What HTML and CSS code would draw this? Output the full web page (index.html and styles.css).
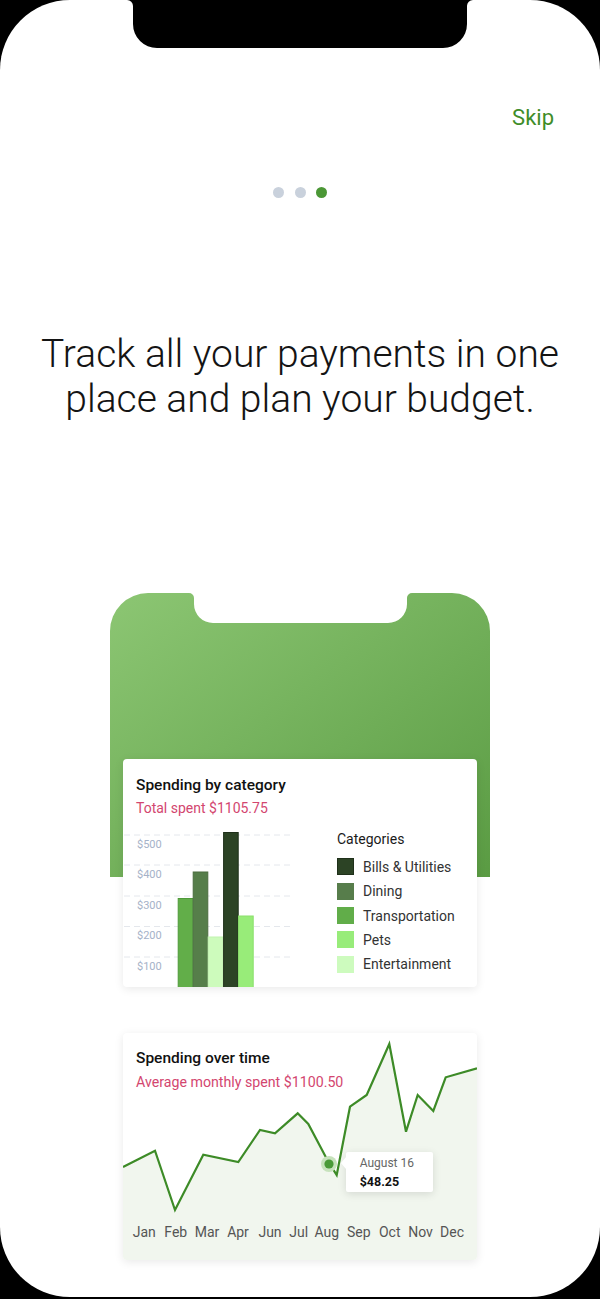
FILE: index.html
```html
<!DOCTYPE html>
<html lang="en">
<head>
<meta charset="utf-8">
<title>Onboarding</title>
<link rel="stylesheet" href="styles.css">
</head>
<body>
<div class="screen">
  <svg class="notch" width="346" height="48" viewBox="0 0 346 48"><path d="M0,0 A6,6 0 0 1 6,6 L6,24 A24,24 0 0 0 30,48 L316,48 A24,24 0 0 0 340,24 L340,6 A6,6 0 0 1 346,0 Z" fill="#000"/></svg>

  <header class="skip-row"><span class="skip">Skip</span></header>

  <div class="dots"><span class="dot"></span><span class="dot"></span><span class="dot active"></span></div>

  <h1 class="headline">Track all your payments in one<br>place and plan your budget.</h1>

  <div class="device">
    <svg class="device-top" width="380" height="284" viewBox="0 0 380 284">
      <defs>
        <linearGradient id="g" x1="0" y1="0" x2="1" y2="1">
          <stop offset="0" stop-color="#8cc673"/>
          <stop offset="1" stop-color="#5a9b43"/>
        </linearGradient>
      </defs>
      <path d="M0,284 L0,38 A38,38 0 0 1 38,0 L79,0 A5,5 0 0 1 84,5 L84,11 A19,19 0 0 0 103,30 L278,30 A19,19 0 0 0 297,11 L297,5 A5,5 0 0 1 302,0 L342,0 A38,38 0 0 1 380,38 L380,284 Z" fill="url(#g)"/>
    </svg>

    <div class="cards">
      <section class="card card-category">
        <h2 class="card-title">Spending by category</h2>
        <p class="card-sub">Total spent $1105.75</p>
        <div class="cat-body">
          <svg class="bar-chart" width="214" height="161" viewBox="0 0 214 161">
            <g class="grid">
              <line x1="1" y1="9" x2="167" y2="9"/>
              <line x1="1" y1="39" x2="167" y2="39"/>
              <line x1="1" y1="70" x2="167" y2="70"/>
              <line x1="1" y1="100.5" x2="167" y2="100.5"/>
              <line x1="1" y1="131" x2="167" y2="131"/>
            </g>
            <g class="ylab">
              <text x="14" y="22">$500</text>
              <text x="14" y="52">$400</text>
              <text x="14" y="83">$300</text>
              <text x="14" y="113">$200</text>
              <text x="14" y="144">$100</text>
            </g>
            <rect x="55.2" y="72.5" width="14.6" height="89" fill="#62ae49" stroke="#4f9a3a" stroke-width="1"/>
            <rect x="70.2" y="46" width="14.6" height="115.5" fill="#567e4a" stroke="#4a6d3f" stroke-width="1"/>
            <rect x="85.2" y="111" width="14.6" height="50.5" fill="#cdfbbc" stroke="#c2f3b0" stroke-width="1"/>
            <rect x="100.6" y="6.5" width="14.6" height="155" fill="#2c4325" stroke="#1f301a" stroke-width="1"/>
            <rect x="115.6" y="90" width="14.6" height="71.5" fill="#98ec79" stroke="#8be06c" stroke-width="1"/>
          </svg>
          <div class="legend">
            <div class="legend-title">Categories</div>
            <ul class="legend-list">
              <li><span class="sw sw-bills"></span>Bills &amp; Utilities</li>
              <li><span class="sw sw-dining"></span>Dining</li>
              <li><span class="sw sw-transport"></span>Transportation</li>
              <li><span class="sw sw-pets"></span>Pets</li>
              <li><span class="sw sw-ent"></span>Entertainment</li>
            </ul>
          </div>
        </div>
      </section>

      <section class="card card-time">
        <svg class="line-chart" width="354" height="227" viewBox="0 0 354 227">
          <polygon class="area" points="0,134 32,117.7 52,177 80.3,121.7 115.3,129 137,97 152,100.3 174.7,80.3 185.3,91 205.3,128.7 213.7,142 227,73.7 243.7,62 266.3,11 283,98.7 294.7,62 310.3,78 322.7,44.3 354,35.3 354,227 0,227"/>
          <polyline class="line" points="0,134 32,117.7 52,177 80.3,121.7 115.3,129 137,97 152,100.3 174.7,80.3 185.3,91 205.3,128.7 213.7,142 227,73.7 243.7,62 266.3,11 283,98.7 294.7,62 310.3,78 322.7,44.3 354,35.3"/>
          <circle cx="206" cy="131" r="8" fill="#c7e2bc"/>
          <circle cx="206" cy="131" r="4.6" fill="#4a9a38"/>
          <g class="xlab">
            <text x="21.2" y="203.7">Jan</text>
            <text x="52.8" y="203.7">Feb</text>
            <text x="84" y="203.7">Mar</text>
            <text x="115" y="203.7">Apr</text>
            <text x="147" y="203.7">Jun</text>
            <text x="175.8" y="203.7">Jul</text>
            <text x="203.7" y="203.7">Aug</text>
            <text x="235.8" y="203.7">Sep</text>
            <text x="266.7" y="203.7">Oct</text>
            <text x="297.5" y="203.7">Nov</text>
            <text x="329" y="203.7">Dec</text>
          </g>
        </svg>
        <div class="time-head">
          <h2 class="card-title">Spending over time</h2>
          <p class="card-sub">Average monthly spent $1100.50</p>
        </div>
        <div class="tooltip">
          <div class="tip-date">August 16</div>
          <div class="tip-val">$48.25</div>
        </div>
      </section>
    </div>
  </div>
</div>
</body>
</html>
```

FILE: styles.css
```css
* { box-sizing: border-box; }
html, body { margin: 0; padding: 0; }
body {
  background: #000;
  font-family: Roboto, "Liberation Sans", Arial, sans-serif;
  width: 600px;
  height: 1299px;
  overflow: hidden;
}
.screen {
  position: relative;
  width: 600px;
  height: 1297px;
  background: #fff;
  border-radius: 70px;
  overflow: hidden;
}
.notch { position: absolute; top: 0; left: 127px; display: block; }

.skip-row { display: flex; justify-content: flex-end; padding: 105px 46px 0 0; }
.skip { font-size: 22px; line-height: 26px; color: #3f8d29; }

.dots { display: flex; justify-content: center; gap: 10.5px; margin-top: 55.5px; }
.dot { width: 11px; height: 11px; border-radius: 50%; background: #c9d1dc; }
.dot.active { background: #4b9736; }

.headline {
  margin: 134.2px 0 0;
  font-weight: 300;
  font-size: 39px;
  line-height: 45px;
  text-align: center;
  color: #141414;
  white-space: nowrap;
}

.device { width: 380px; margin: 171.3px auto 0; }
.device-top { display: block; }

.cards {
  position: relative;
  margin-top: -118px;
  padding: 0 13px;
  display: flex;
  flex-direction: column;
  gap: 46px;
}
.card {
  background: #fff;
  border-radius: 4px;
  box-shadow: 0 2px 10px rgba(0, 0, 0, 0.09);
  overflow: hidden;
}
.card-title {
  margin: 0;
  font-size: 15.5px;
  line-height: 18px;
  font-weight: 500;
  color: #111;
}
.card-sub {
  margin: 5.3px 0 0;
  font-size: 14px;
  line-height: 18px;
  color: #d3466f;
}

.card-category { height: 228px; padding-top: 17px; }
.card-category > .card-title,
.card-category > .card-sub { margin-left: 13px; }
.cat-body { display: flex; margin-top: 8.7px; }
.bar-chart { display: block; flex: none; }
.grid line { stroke: #e4e7ec; stroke-width: 1; stroke-dasharray: 6 4; }
.ylab text { font-size: 11px; fill: #a5b2c8; font-family: Roboto, "Liberation Sans", sans-serif; }

.legend { padding-top: 4px; }
.legend-title { font-size: 14px; line-height: 18px; color: #1a1a1a; }
.legend-list {
  list-style: none;
  margin: 10.3px 0 0;
  padding: 0;
  display: flex;
  flex-direction: column;
  gap: 7.4px;
}
.legend-list li {
  display: flex;
  align-items: center;
  height: 17px;
  font-size: 14px;
  color: #333;
}
.sw { width: 17px; height: 17px; margin-right: 9px; flex: none; }
.sw-bills { background: #2c4325; border: 1px solid #1f301a; }
.sw-dining { background: #577d4b; }
.sw-transport { background: #61ad49; }
.sw-pets { background: #98ec7a; }
.sw-ent { background: #cdfbbe; }

.card-time {
  position: relative;
  height: 227px;
  display: grid;
}
.card-time > .line-chart,
.card-time > .time-head { grid-area: 1 / 1; }
.line-chart { display: block; }
.area { fill: #f1f6ee; }
.line { fill: none; stroke: #3d8b27; stroke-width: 2.2; stroke-linejoin: miter; }
.xlab text {
  font-size: 14px;
  fill: #555;
  text-anchor: middle;
  font-family: Roboto, "Liberation Sans", sans-serif;
}
.time-head { align-self: start; padding: 16.3px 13px 0; }
.time-head .card-sub { font-size: 14.2px; }

.tooltip {
  position: absolute;
  left: 222.7px;
  top: 118.7px;
  width: 87.6px;
  height: 40.6px;
  padding: 4px 0 0 14px;
  background: #fff;
  border-radius: 2px;
  box-shadow: 0 2px 8px rgba(0, 0, 0, 0.12);
}
.tooltip::before {
  content: "";
  position: absolute;
  left: -5px;
  top: 5.6px;
  border-top: 6px solid transparent;
  border-bottom: 6px solid transparent;
  border-right: 5px solid #fff;
}
.tip-date { font-size: 12px; line-height: 14px; color: #666; }
.tip-val { margin-top: 5px; font-size: 12.5px; line-height: 14px; font-weight: 700; color: #111; }
```
